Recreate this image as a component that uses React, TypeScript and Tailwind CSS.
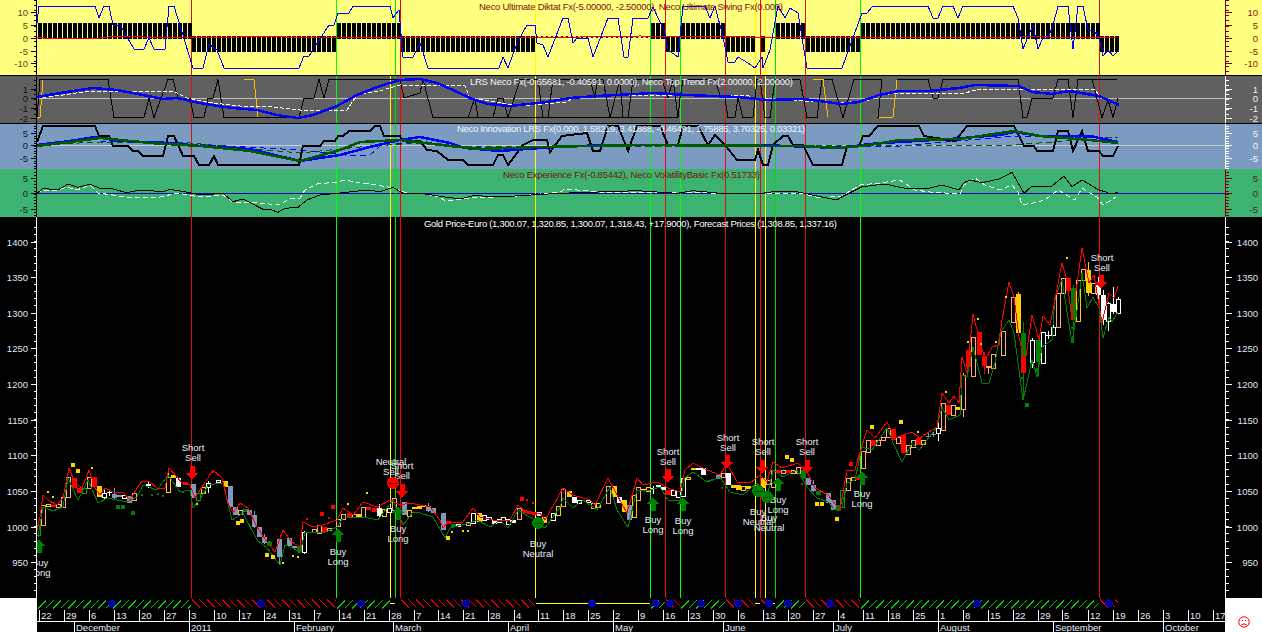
type Pt = number[]
type Candle = [number, number, number, string, number?, number?]

const pts = (p: Pt) => {
    let out = ""
    for (let i = 0; i < p.length; i += 2) out += `${p[i]},${p[i + 1]} `
    return out
}

const SIGNALS: [number, string][] = [
    [191, "#dd1111"], [336, "#00ff00"], [390, "#ffff00"], [395, "#00e000"], [400, "#ff0000"],
    [535, "#ffff00"], [650, "#00ff00"], [665, "#dd1111"], [680, "#00ff00"], [725, "#dd1111"],
    [755, "#ffff00"], [760, "#ff0000"], [765, "#ffff00"], [775, "#00e000"], [805, "#dd1111"],
    [860, "#00ff00"], [1099, "#dd1111"],
]

const SWING = [37,23,39,6,95,6,99,18,104,6,109,6,113,25,120,25,134,49,144,49,149,38,154,49,165,49,169,6,174,6,193,68,203,68,209,44,217,50,224,68,299,68,304,56,309,56,329,25,334,25,338,13,349,13,353,6,390,6,393,18,399,10,403,57,413,57,420,43,428,68,499,68,503,57,508,68,517,43,527,25,535,25,537,43,543,45,548,57,563,18,568,18,573,43,577,38,588,38,593,57,608,18,618,18,624,57,628,57,633,18,648,18,653,7,665,33,668,50,678,57,683,6,705,6,710,18,715,6,723,37,728,62,735,62,738,57,748,63,755,68,762,57,763,68,770,50,778,6,785,18,790,8,798,13,807,68,842,68,862,13,867,13,873,6,928,6,933,18,938,18,943,6,953,6,958,18,963,6,1013,6,1018,18,1023,49,1033,25,1038,49,1043,38,1048,38,1053,25,1058,6,1068,6,1073,49,1078,6,1083,6,1088,30,1093,30,1099,37,1103,56,1108,50,1113,56,1119,50]
const DIKTAT_RED = [37,37,50,39,100,38,117,36,143,37,167,37,187,38,240,37,270,36,300,38,340,37,420,37,520,38,640,36,700,37,725,36,760,38,800,37,860,38,1020,37,1040,36,1060,38,1118,37]

const LRS_BLUE = [37,97,67,92,93,88,117,90,143,95,163,99,177,98,200,103,217,106,233,108,257,110,277,115,298,118,313,115,337,106,357,95,377,87,400,80,420,79,437,83,453,90,470,98,487,104,510,106,547,102,570,98,597,96,653,93,687,95,737,97,767,100,803,99,842,104,859,102,879,95,899,91,929,91,959,88,975,85,1019,86,1032,92,1052,94,1069,91,1099,96,1119,105]
const LRS_WHITE = [37,98,63,95,83,92,173,91,187,98,213,103,240,106,273,107,300,110,347,110,357,95,383,90,400,85,465,86,470,98,520,106,567,102,573,97,620,95,747,95,753,98,840,103,869,100,879,95,899,93,965,93,979,89,1017,89,1094,89,1099,95,1118,105]
const TREND = [37,117.5,40,79.5,108,79.5,114,117.5,144,117.5,149,98,154,117.5,168,79.5,173,79.5,178,98,190,98,194,117.5,204,117.5,208,98,213,98,218,79.5,224,117.5,299,117.5,304,98,314,98,319,79.5,324,98,329,79.5,400,79.5,404,98,420,93,423,79.5,433,117.5,468,117.5,475,98,478,117.5,493,117.5,498,98,503,98,508,117.5,520,79.5,538,79.5,543,117.5,548,117.5,553,79.5,590,79.5,595,98,597,79.5,603,79.5,610,117.5,620,79.5,623,117.5,628,117.5,633,79.5,662,79.5,668,98,673,79.5,678,117.5,680,98,683,79.5,715,79.5,720,95,725,98,728,117.5,735,117.5,738,98,743,117.5,753,117.5,757,79.5,760,79.5,765,117.5,770,117.5,775,79.5,800,79.5,807,117.5,817,117.5,822,79.5,832,79.5,843,117.5,854,79.5,882,79.5,878,117.5,893,117.5,897,80,928,79.5,933,98,938,98,943,79.5,1018,79.5,1023,117.5,1027,117.5,1032,98,1053,98,1058,79.5,1068,79.5,1073,117.5,1078,79.5,1092,79.5,1102,117.5,1108,100,1113,117.5,1118,98]

const INNO_BLACK = [37,142,43,126,95,126,99,136,109,136,113,146,128,146,133,151,138,151,143,156,163,156,168,136,174,136,183,156,194,156,199,165,209,165,214,156,218,165,299,165,303,146,320,146,324,141,335,141,338,136,343,136,349,131,370,131,375,126,380,126,384,136,400,136,403,141,420,141,427,150,437,151,448,160,463,160,468,165,493,165,498,155,503,155,508,165,523,145,533,140,547,140,550,152,562,136,587,133,593,151,600,151,608,126,618,126,628,151,637,126,660,126,668,145,678,145,683,126,698,126,708,145,715,135,725,145,737,160,755,160,758,150,763,165,768,165,773,145,783,136,788,136,793,145,803,145,813,165,842,165,847,146,859,146,863,136,869,136,878,126,919,126,924,136,955,141,967,126,1014,126,1024,146,1034,146,1037,151,1053,151,1058,131,1068,131,1073,151,1082,131,1088,151,1099,151,1103,156,1113,156,1118,146]
const INNO_BLUE = [37,145,70,141,95,137,120,141,170,143,200,146,250,149,300,161,340,155,370,147,400,140,420,137,450,143,465,148,500,151,540,148,570,146,640,145,760,145,840,148,870,144,899,142,950,139,1000,135,1014,132,1040,136,1090,136,1118,142]
const INNO_GREEN = [37,146,70,142,100,138,150,143,200,146,250,151,300,161,340,150,360,142,400,140,450,146,480,149,540,147,640,145,800,146,840,148,870,145,899,140,960,139,1014,131,1040,136,1090,140,1118,143]
const INNO_DASH_BLUE = [100,141,190,144,300,150,345,155,370,155,380,146,420,141,470,148,570,146,760,146,870,147,900,146,1014,136,1118,138]
const INNO_DASH_GREEN = [37,145,100,142,190,143,300,153,370,146,420,143,470,147,640,146,800,146,900,145,1000,146,1118,137]

const EXP_BLACK = [37,193.3,43,188.3,58,190,68,184,78,187.3,90,184.3,100,188.3,110,188.3,127,192.7,140,190,163,191.7,170,189.3,190,192.7,200,195,223,193.3,233,201.7,243,199,263,209.3,270,209.3,278,212.3,285,208.3,298,207.3,307,200,320,195,337,193.3,367,190,380,191.7,393,187.3,403,193.3,420,193.3,443,196.7,460,199,473,195.7,503,196.7,560,193.3,607,191.7,637,190.7,677,193.3,693,190.7,720,193.3,757,194,773,191.7,797,191.7,820,196.7,837,200,842,196.7,862,186.7,885,184,905,188.3,929,188.3,942,185,959,190,964,182.7,970,180,982,182.7,999,179,1012,172.3,1024,193.3,1032,186,1052,186,1064,176,1072,186.7,1082,180,1099,190,1105,191.7,1110,194,1118,192.3]
const EXP_WHITE = [37,193,43,190,58,190,67,187,77,190,90,185,98,193,113,195,130,198,160,197,177,193,200,197,223,195,233,202,260,203,278,205,290,199,300,198,305,190,317,184,337,182,345,180,360,183,377,185,393,188,407,193,420,193,440,197,445,201,470,198,520,196,560,192,565,189,600,192,680,192,710,193,770,194,800,193,820,198,842,196,860,185,880,183,900,180,915,190,930,192,960,194,964,185,975,178,985,185,1000,190,1012,185,1018,192,1022,205,1027,204,1033,203,1045,200,1058,190,1075,200,1082,188,1097,197,1103,205,1112,200,1116,197]

const RED_BAND = [37,530,40,517,43,495,48,500,57,505,63,498,69,468,75,483,82,488,89,470,95,488,100,495,105,488,115,493,123,492,130,500,137,488,142,481,150,482,157,488,165,488,169,468,177,477,182,483,190,485,195,498,200,490,213,470,222,478,228,503,233,513,240,503,248,508,257,527,267,542,275,552,283,530,292,542,300,547,303,522,313,527,323,525,337,520,343,508,353,515,363,502,377,507,390,500,400,505,410,503,430,507,440,520,443,528,448,522,463,522,473,508,480,517,493,520,510,520,518,505,527,513,540,513,545,520,563,488,573,495,590,500,595,505,608,478,617,495,627,513,637,478,643,485,657,482,668,488,680,492,685,470,693,463,707,470,720,475,727,463,737,482,750,483,760,475,767,482,773,462,782,468,798,463,807,472,815,488,828,495,840,510,847,470,855,470,860,452,867,430,875,438,887,422,895,438,912,432,920,438,929,432,937,427,942,393,949,403,954,396,959,403,962,357,967,373,973,314,979,337,985,360,992,347,999,345,1002,320,1009,282,1014,297,1019,337,1025,363,1032,315,1039,340,1043,316,1050,325,1055,300,1062,263,1067,280,1072,320,1082,248,1089,283,1094,275,1102,323,1109,293,1114,298,1118,286]
const GREEN_BAND = [38,537,43,507,53,511,63,507,68,478,78,500,88,480,98,503,107,498,127,502,137,497,143,485,157,490,168,475,180,492,190,490,193,508,200,500,208,485,223,483,232,520,243,513,257,540,267,548,280,565,285,545,293,548,300,553,305,532,323,533,337,527,343,518,363,517,378,520,393,500,403,525,413,512,420,513,433,517,445,538,450,528,470,523,477,520,490,527,500,520,508,528,518,510,530,517,545,528,560,507,563,498,573,508,583,500,597,510,610,487,617,510,628,527,637,490,650,490,660,487,668,500,680,500,685,478,693,472,707,482,720,477,730,492,743,495,757,483,767,497,773,470,783,477,797,470,807,487,817,498,828,502,835,510,842,507,847,483,855,480,862,447,872,450,887,428,894,445,902,462,912,443,919,450,937,427,942,407,949,420,960,415,962,375,967,377,973,347,982,383,989,383,995,363,1000,333,1009,320,1014,333,1023,400,1027,383,1032,360,1037,377,1042,347,1052,340,1055,297,1062,280,1072,343,1079,297,1082,273,1087,308,1093,297,1099,308,1103,338,1109,317,1112,322,1118,312]

const CANDLES: Candle[] = [
    [38,525,535,"e"],[43,505,525,"o"],[48,504,506,"y"],[53,505,507,"R"],[58,504,507,"o"],[63,497,507,"o"],[68,477,497,"o"],[74,478,488,"R"],[79,488,493,"R"],[84,488,493,"e"],[89,477,488,"o"],[94,477,487,"R"],[99,486,497,"Y"],[104,493,497,"w",490,499],[109,492,493,"W",490,496],[114,494,498,"B",488,499],[119,495,497,"B"],[124,495,498,"w"],[129,496,503,"B"],[134,493,500,"o"],
    [148,484,486,"W",482,488],[168,477,492,"y",473,493],[173,475,478,"Y"],[178,478,487,"W"],[185,482,485,"R"],[193,484,498,"B"],[198,493,500,"e"],[203,487,493,"y"],[208,483,487,"w",481,493],[218,480,482,"w"],[225,481,487,"Y"],[230,486,507,"B"],[235,507,515,"B"],[240,510,514,"o"],[245,509,512,"G"],[249,510,515,"B"],[254,515,527,"B",511,528],[259,527,537,"B"],[264,537,543,"B",534,544],[269,542,546,"G"],[279,539,557,"B",538,565],[289,538,546,"B"],[294,546,548,"B"],[299,547,552,"G"],[304,532,552,"w",531,554],
    [314,529,532,"o"],[319,525,533,"o"],[324,527,532,"R"],[329,528,530,"o"],[338,519,526,"o"],[343,514,519,"o"],[349,513,518,"R"],[354,514,517,"o"],[359,514,517,"Y"],[363,507,517,"o"],[368,507,510,"R"],[374,508,512,"R"],[379,508,516,"W",504,518],[384,509,516,"y"],[389,508,512,"w"],[394,498,510,"o"],[404,502,515,"B"],[409,510,516,"y"],[414,507,509,"Y"],[419,506,509,"Y"],
    [423,505,507,"Y"],[428,506,511,"B",503,512],[433,508,513,"B"],[443,513,530,"B"],[448,521,524,"R"],[453,524,527,"G"],[458,524,526,"w"],[468,522,525,"o"],[473,513,523,"w"],[479,513,522,"Y"],[484,515,520,"w"],[489,517,519,"w"],[494,520,524,"W"],[499,519,522,"w"],[503,517,520,"w"],[508,519,524,"w"],[513,520,523,"W"],[519,508,519,"o"],[524,510,513,"R"],[529,511,513,"R"],[534,512,515,"R"],[539,512,516,"W"],[544,517,523,"Y"],[553,513,520,"w"],[558,506,515,"y"],[563,489,506,"o"],[569,491,497,"Y"],[574,497,503,"W"],[579,500,503,"w"],[588,500,502,"w"],[593,503,508,"o"],[598,503,507,"y"],
    [608,486,503,"o"],[614,486,497,"Y"],[619,497,503,"W"],[624,500,512,"Y"],[629,505,520,"B"],[634,495,517,"y"],[638,487,500,"o"],[643,489,491,"Y"],[648,487,491,"y"],[653,488,489,"W",486,494],[658,485,487,"W"],[663,487,490,"W"],[668,490,495,"R"],[673,490,495,"w"],[678,491,497,"w"],[683,478,496,"w"],[688,477,479,"y"],[693,468,470,"Y"],[698,468,470,"W"],[703,468,475,"W"],[718,475,479,"B"],[723,473,477,"o"],[728,473,485,"W"],[733,485,488,"Y"],[738,485,490,"Y"],[743,486,490,"y"],[748,486,489,"Y"],[758,486,491,"W"],[763,478,488,"Y"],[768,480,484,"o"],[773,470,487,"o"],[778,470,473,"R"],[783,470,473,"o"],[788,470,473,"R"],[793,470,473,"o"],[798,467,473,"o"],[803,470,479,"G"],[808,478,485,"B"],[813,485,491,"B",480,492],[818,491,495,"G"],[828,493,503,"B"],[833,500,510,"B"],[838,505,511,"G"],
    [842,490,507,"e"],[848,478,490,"o"],[853,477,480,"y"],[858,477,480,"R"],[863,451,468,"o"],[868,440,452,"o"],[873,440,446,"R"],[878,440,445,"o"],[883,437,440,"o"],[888,428,437,"o"],[893,429,440,"R"],[898,437,443,"o"],[903,435,453,"R"],[908,445,454,"o"],[913,440,447,"o"],[918,438,445,"R"],[923,440,444,"y"],[928,436,437,"B",433,439],[933,434,435,"B",431,437],[938,428,433,"w",423,441],
    [943,403,430,"o"],[948,405,415,"R"],[953,405,415,"o"],[958,407,410,"Y"],[963,375,409,"o",373,417],[968,350,367,"R"],[973,337,376,"o"],[979,332,355,"R"],[984,356,366,"R",352,374],[988,366,367,"o",366,374],[993,354,368,"o"],[1003,331,355,"o"],[1013,297,322,"o"],[1018,294,333,"Y",292,337],[1023,333,373,"G",322,400],[1023,357,373,"R"],[1032,340,362,"w",338,368],[1038,340,362,"G",338,376],[1043,332,363,"w"],[1048,335,336,"W",331,339],[1053,327,335,"w",325,336],[1058,293,327,"o"],[1063,278,293,"o"],[1068,278,291,"R"],[1073,288,320,"G",285,343],[1078,280,321,"y"],[1083,269,280,"o"],[1088,270,293,"Y",262,296],[1093,283,293,"y"],[1098,285,295,"W",277,300],[1103,295,320,"W",290,325],[1108,303,321,"w",302,331],[1113,304,312,"W",287,314],[1118,299,313,"w",297,314],
]

const DOTS: [number, number, number, string][] = [
    [73,465,2.5,"#ffd700"],[78,471,2.5,"#ffd700"],[92,468,1.5,"#ffd700"],[48,492,1.5,"#ffd700"],[53,497,1.5,"#ffd700"],[197,504,1.5,"#ffd700"],[238,523,2.5,"#ffd700"],[242,521,2.5,"#ffd700"],[267,555,2.5,"#ffd700"],[273,557,2.5,"#ffd700"],[283,563,1.5,"#ffd700"],[293,556,1.5,"#ffd700"],[298,557,1.5,"#ffd700"],[348,504,1.5,"#ffd700"],[367,493,1.5,"#ffd700"],[448,538,2.5,"#ffd700"],[452,532,1.5,"#ffd700"],[463,531,1.5,"#ffd700"],[468,531,1.5,"#ffd700"],[787,457,2.5,"#ffd700"],[792,460,2.5,"#ffd700"],[817,504,2.5,"#ffd700"],[822,504,2.5,"#ffd700"],[837,519,2.5,"#ffd700"],[872,427,2.5,"#ffd700"],[901,422,2.5,"#ffd700"],[918,432,1.5,"#ffd700"],[946,392,1.5,"#ffd700"],[968,342,1.5,"#ffd700"],[978,319,1.5,"#ffd700"],[981,344,1.5,"#ffd700"],[996,342,1.5,"#ffd700"],[1006,297,1.5,"#ffd700"],[1067,258,1.5,"#ffd700"],
    [213,472,1.5,"#ff0000"],[307,519,1.5,"#ff0000"],[333,507,2.5,"#ff0000"],[322,514,2.5,"#ff0000"],[329,518,1.5,"#ff0000"],[522,499,2.5,"#ff0000"],[527,500,1.5,"#ff0000"],[533,503,1.5,"#ff0000"],[851,464,2.5,"#ff0000"],[858,459,1.5,"#ff0000"],
    [118,507,2.5,"#008000"],[123,507,2.5,"#008000"],[133,513,2.5,"#008000"],[142,495,1.5,"#008000"],[152,495,1.5,"#008000"],[158,494,1.5,"#008000"],[163,496,1.5,"#008000"],[183,492,1.5,"#008000"],[269,543,2,"#008000"],[708,481,1.5,"#008000"],[712,480,1.5,"#008000"],[722,488,1.5,"#008000"],[802,484,1.5,"#008000"],[1027,405,2.5,"#008000"],[1022,378,1.5,"#008000"],[1037,370,2,"#008000"],[1072,328,1.5,"#008000"],
]

const SHORTS = [[193,192,447,466],[402,402,465,484],[668,668,451,469],[728,727,437,455],[763,762,441,460],[807,807,441,460],[1102,1101,257,275]]
const LONGS = [[40,39,562,539],[338,338,551,528],[398,398,528,506],[653,653,519,497],[683,683,520,497],[778,778,499,477],[862,862,493,471]]
const NEUTRALS = [[538,538,523,543],[758,758,491,511],[769,767,497,517]]

const WEEKS: [number, string][] = [
    [39,"22"],[64,"29"],[89,"6"],[114,"13"],[139,"20"],[164,"27"],[189,"3"],[214,"10"],[239,"17"],[264,"24"],[289,"31"],[314,"7"],[339,"14"],[364,"21"],[389,"28"],[414,"7"],[438,"14"],[463,"21"],[488,"28"],[514,"4"],[538,"11"],[563,"18"],[588,"25"],[613,"2"],[638,"9"],[663,"16"],[688,"23"],[713,"30"],[738,"6"],[763,"13"],[788,"20"],[813,"27"],[838,"4"],[863,"11"],[888,"18"],[913,"25"],[938,"1"],[963,"8"],[988,"15"],[1013,"22"],[1038,"29"],[1062,"5"],[1088,"12"],[1113,"19"],[1138,"26"],[1163,"3"],[1188,"10"],[1213,"17"],
]
const MONTHS: [number, string][] = [[74,"December"],[189,"2011"],[294,"February"],[393,"March"],[508,"April"],[613,"May"],[723,"June"],[833,"July"],[938,"August"],[1053,"September"],[1163,"October"]]

const HATCH: [number, number, string][] = [
    [37,191,"g"],[191,336,"r"],[336,390,"g"],[390,395,"y"],[400,535,"r"],[536,650,"y"],[650,665,"g"],[665,680,"r"],[680,725,"g"],[725,755,"r"],[755,760,"y"],[760,765,"r"],[765,775,"y"],[775,805,"g"],[805,860,"r"],[860,1099,"g"],[1099,1118,"r"],
]
const RINGS = [112,261,361,466,592,656,670,701,738,769,788,830,977,1109]

const BAR_RUNS: [number, number, number][] = [
    [37,191,1],[191,336,-1],[336,400,1],[400,536,-1],[650,665,1],[665,680,-1],[680,725,1],[725,755,-1],[760,765,-1],[775,805,1],[805,860,-1],[860,1099,1],[1099,1120,-1],
]

function Signals({ y1, y2 }: { y1: number; y2: number }) {
    return (
        <>
            {SIGNALS.map(([x, c]) => (
                <line key={x} x1={x + 0.5} x2={x + 0.5} y1={y1} y2={y2} stroke={c} />
            ))}
        </>
    )
}

function Line({ p, c, w = 1, dash }: { p: Pt; c: string; w?: number; dash?: string }) {
    return <polyline points={pts(p)} fill="none" stroke={c} strokeWidth={w} strokeDasharray={dash} />
}

function Title({ y, x1, x2, fill, children }: { y: number; x1: number; x2: number; fill: string; children: string }) {
    return (
        <text x={x1} y={y} fill={fill} fontSize={9.5} textLength={x2 - x1} lengthAdjust="spacing">
            {children}
        </text>
    )
}

type AxisProps = {
    top: number
    height: number
    side: "left" | "right"
    line: string
    label: string
    minor: number[]
    major: [number, string][]
}

function Axis({ top, height, side, line, label, minor, major }: AxisProps) {
    const left = side === "left"
    const x0 = left ? 0 : 1225
    const base = left ? 36.5 : 1225.5
    const dir = left ? -1 : 1
    return (
        <svg viewBox={`${x0} ${top} 37 ${height}`} className="block h-full w-[37px] shrink-0" shapeRendering="crispEdges">
            <line x1={base} x2={base} y1={top} y2={top + height} stroke={line} />
            {minor.map((y) => (
                <line key={y} x1={base} x2={base + dir * 3} y1={y} y2={y} stroke={line} />
            ))}
            {major.map(([y, t]) => (
                <g key={t}>
                    <line x1={base} x2={base + dir * 6} y1={y} y2={y} stroke={line} />
                    <text x={left ? 28 : 1258} y={y + 3.5} textAnchor="end" fontSize={9.5} fill={label}>
                        {t}
                    </text>
                </g>
            ))}
        </svg>
    )
}

const range = (from: number, to: number, step: number) => {
    const out: number[] = []
    for (let y = from; y <= to; y += step) out.push(Math.round(y) + 0.5)
    return out
}

const YELLOW_T: [number, string][] = [[12.5,"10"],[25.5,"5"],[38,"0"],[51,"-5"],[63.5,"-10"]]
const GRAY_T: [number, string][] = [[89,"1"],[98.5,"0"],[108.5,"-1"],[118,"-2"]]
const BLUE_T: [number, string][] = [[133,"5"],[145.5,"0"],[158,"-5"]]
const GREEN_T: [number, string][] = [[178,"5"],[193.5,"0"],[209,"-5"]]
const PRICE_T: [number, string][] = [1400,1350,1300,1250,1200,1150,1100,1050,1000,950].map((p) => [Math.round(241.5 + (1400 - p) * 0.7125) + 0.5, String(p)])

function Row({ top, height, bg, left, right, children }: { top: number; height: number; bg: string; left: React.ReactNode; right: React.ReactNode; children: React.ReactNode }) {
    return (
        <div className={`flex shrink-0 ${bg}`} style={{ height }}>
            {left}
            <svg viewBox={`37 ${top} 1188 ${height}`} className="block h-full min-w-0 flex-1" shapeRendering="crispEdges">
                {children}
            </svg>
            {right}
        </div>
    )
}

function Sad() {
    return (
        <svg viewBox="0 0 12 12" className="h-3 w-3 text-[#ff0000]" fill="none" stroke="currentColor" strokeWidth={1}>
            <circle cx="6" cy="6" r="5.2" />
            <path d="M3.2 9 Q6 6.6 8.8 9" />
            <path d="M3.8 4.5h1.2M7 4.5h1.2" />
        </svg>
    )
}

function Chart() {
    return (
        <>
            <Signals y1={217} y2={598} />
            {CANDLES.map(([x, t, b, k, wt, wb], i) => {
                const color: Record<string, string> = { w: "#ffffff", o: "#ffaa70", y: "#ffcc00", e: "#00a000", W: "#ffffff", Y: "#ffcc00", R: "#ff0000", G: "#008000", B: "#8098c0" }
                const hollow = k === k.toLowerCase()
                return (
                    <g key={i}>
                        <line x1={x + 0.5} x2={x + 0.5} y1={wt ?? t} y2={wb ?? b} stroke={color[k]} />
                        <rect x={hollow ? x - 1.5 : x - 2} y={t} width={hollow ? 4 : 5} height={Math.max(b - t, 1)} fill={hollow ? "#000000" : color[k]} stroke={hollow ? color[k] : "none"} />
                    </g>
                )
            })}
            <Line p={GREEN_BAND} c="#008000" />
            <Line p={RED_BAND} c="#ff0000" />
            {DOTS.map(([x, y, r, c], i) => (
                <circle key={i} cx={x} cy={y} r={r} fill={c} />
            ))}
            {SHORTS.map(([tx, ax, ty, at]) => (
                <g key={tx}>
                    <text x={tx} y={ty + 3.5} fill="#e6eefc" fontSize={9.5} textAnchor="middle">Short</text>
                    <text x={tx} y={ty + 14} fill="#e6eefc" fontSize={9.5} textAnchor="middle">Sell</text>
                    <path d={`M${ax - 2.5} ${at}h5v7h3.5l-6 6.5l-6 -6.5h3.5z`} fill="#ff0000" />
                </g>
            ))}
            {LONGS.map(([tx, ax, ty, at]) => (
                <g key={tx}>
                    <text x={tx} y={ty + 3.5} fill="#e6eefc" fontSize={9.5} textAnchor="middle">Buy</text>
                    <text x={tx} y={ty + 14} fill="#e6eefc" fontSize={9.5} textAnchor="middle">Long</text>
                    <path d={`M${ax} ${at}l6 6.5h-3.5v7h-5v-7h-3.5z`} fill="#008000" />
                </g>
            ))}
            {NEUTRALS.map(([tx, ax, cy, ty]) => (
                <g key={tx}>
                    <circle cx={ax} cy={cy} r={6} fill="#008000" />
                    <line x1={ax - 4} x2={ax + 4} y1={cy} y2={cy} stroke="#003000" strokeDasharray="2 1" />
                    <text x={tx} y={ty + 3.5} fill="#e6eefc" fontSize={9.5} textAnchor="middle">Buy</text>
                    <text x={tx} y={ty + 14} fill="#e6eefc" fontSize={9.5} textAnchor="middle">Neutral</text>
                </g>
            ))}
            <circle cx={393} cy={483} r={6} fill="#ff0000" />
            <line x1={389} x2={397} y1={483.5} y2={483.5} stroke="#300000" strokeDasharray="2 1" />
            <text x={391} y={464.5} fill="#e6eefc" fontSize={9.5} textAnchor="middle">Neutral</text>
            <text x={391} y={475} fill="#e6eefc" fontSize={9.5} textAnchor="middle">Sell</text>
            <Title y={227} x1={424} x2={837} fill="#ffffff">Gold Price-Euro (1,300.07, 1,320.85, 1,300.07, 1,318.43, +17.9000), Forecast Prices (1,308.85, 1,337.16)</Title>
        </>
    )
}

function TimeAxis() {
    return (
        <svg viewBox="37 598 1188 34" className="block h-full min-w-0 flex-1" shapeRendering="crispEdges">
            {HATCH.map(([a, b, k]) => {
                if (k === "y") return <line key={a} x1={a} x2={b} y1={603.5} y2={603.5} stroke="#ffff00" />
                const out = []
                for (let x = a + 1; x < b - 1; x += 7.5) {
                    const x2 = Math.min(x + 8, b)
                    out.push(
                        k === "g"
                            ? <line key={x} x1={x} x2={x2} y1={608.5} y2={608.5 - (x2 - x)} stroke="#00d000" />
                            : <line key={x} x1={x} x2={x2} y1={599.5} y2={599.5 + (x2 - x)} stroke="#e00000" />
                    )
                }
                return <g key={a}>{out}</g>
            })}
            {RINGS.map((x) => (
                <g key={x}>
                    <circle cx={x} cy={603.5} r={3.2} fill="#000090" stroke="#0000ff" />
                </g>
            ))}
            {WEEKS.map(([x, t]) => (
                <g key={x}>
                    <line x1={x + 0.5} x2={x + 0.5} y1={610} y2={621} stroke="#ffffff" />
                    <text x={x + 2} y={619} fill="#e6eefc" fontSize={9.5}>{t}</text>
                </g>
            ))}
            <line x1={37} x2={1225} y1={621.5} y2={621.5} stroke="#ffffff" />
            {MONTHS.map(([x, t]) => (
                <g key={x}>
                    <line x1={x + 0.5} x2={x + 0.5} y1={622} y2={632} stroke="#ffffff" />
                    <text x={x + 2} y={631} fill="#e6eefc" fontSize={9.5}>{t}</text>
                </g>
            ))}
        </svg>
    )
}

export default function App() {
    const bars: React.ReactNode[] = []
    for (const [a, b, s] of BAR_RUNS) {
        for (let x = a + 1; x < b; x += 5) {
            bars.push(<rect key={`${a}-${x}`} x={x} y={s > 0 ? 23 : 36} width={4} height={s > 0 ? 16 : 16} fill="#000000" />)
        }
    }
    for (let x = 536; x < 650; x += 5) bars.push(<rect key={`d${x}`} x={x} y={36} width={2} height={2} fill="#000000" />)

    return (
        <div className="flex h-[632px] w-[1262px] flex-col overflow-hidden bg-black font-['Liberation_Sans',Arial,sans-serif]">
            <Row
                top={0}
                height={75}
                bg="bg-[#ffff80]"
                left={<Axis top={0} height={75} side="left" line="#000000" label="#5a4a10" minor={range(0, 74, 5.1)} major={YELLOW_T} />}
                right={<Axis top={0} height={75} side="right" line="#800000" label="#8a1a0a" minor={range(0, 74, 5.1)} major={YELLOW_T} />}
            >
                <Signals y1={0} y2={75} />
                {bars}
                <Line p={DIKTAT_RED} c="#ff0000" />
                <Line p={SWING} c="#0000ff" />
                <Title y={10} x1={479} x2={783} fill="#801010">Neco Ultimate Diktat Fx(-5.00000, -2.50000), Neco Ultimate Swing Fx(0.000)</Title>
            </Row>
            <div className="mt-px" />
            <Row
                top={76}
                height={47}
                bg="bg-[#606060]"
                left={<Axis top={76} height={47} side="left" line="#000000" label="#101010" minor={range(80, 122, 4.8)} major={GRAY_T} />}
                right={<Axis top={76} height={47} side="right" line="#ffffff" label="#f0f0f0" minor={range(80, 122, 4.8)} major={GRAY_T} />}
            >
                <line x1={37} x2={1225} y1={98.5} y2={98.5} stroke="#c0c0c0" />
                <Signals y1={76} y2={123} />
                <Line p={TREND} c="#000000" />
                <Line p={[244,79.5,254,79.5,258,117]} c="#ffc000" />
                <Line p={[37,117.5,40,117.5,43,80]} c="#ffc000" />
                <Line p={[813,79.5,823,79.5,828,117]} c="#ffc000" />
                <Line p={[879,117.5,893,117.5,897,80]} c="#ffc000" />
                <Line p={[433,117.5,678,117.5]} c="#000000" />
                <Line p={[1092,79.5,1117,79.5]} c="#000000" />
                <Line p={LRS_WHITE} c="#ffffff" dash="4 2" />
                <Line p={LRS_BLUE} c="#0000ff" w={2.5} />
                <Title y={85} x1={470} x2={793} fill="#f4f6fa">LRS Neco Fx(-0.65681, -0.40591, 0.0000), Neco Top Trend Fx(2.00000, 2.00000)</Title>
            </Row>
            <div className="mt-px" />
            <Row
                top={124}
                height={45}
                bg="bg-[#7b9bc1]"
                left={<Axis top={124} height={45} side="left" line="#000000" label="#101828" minor={range(125.5, 168, 2.5)} major={BLUE_T} />}
                right={<Axis top={124} height={45} side="right" line="#ffffff" label="#f4f6fa" minor={range(125.5, 168, 2.5)} major={BLUE_T} />}
            >
                <line x1={37} x2={1225} y1={145.5} y2={145.5} stroke="#c8ccd0" />
                <Signals y1={124} y2={169} />
                <Line p={INNO_BLACK} c="#000000" w={2} />
                <Line p={INNO_DASH_BLUE} c="#0000ff" dash="6 4" />
                <Line p={INNO_DASH_GREEN} c="#005a00" dash="6 4" />
                <Line p={INNO_BLUE} c="#0000ff" w={2.5} />
                <Line p={INNO_GREEN} c="#005a00" w={2.5} />
                <Title y={132} x1={457} x2={805} fill="#f4f6fa">Neco Innovation LRS Fx(0.000, 1.58219, 3.41888, -0.46491, 1.75885, 3.70325, 0.03321)</Title>
            </Row>
            <Row
                top={169}
                height={48}
                bg="bg-[#3cb371]"
                left={<Axis top={169} height={48} side="left" line="#000000" label="#10241a" minor={range(172, 216, 3.1)} major={GREEN_T} />}
                right={<Axis top={169} height={48} side="right" line="#800000" label="#5a2410" minor={range(172, 216, 3.1)} major={GREEN_T} />}
            >
                <line x1={37} x2={1225} y1={193.5} y2={193.5} stroke="#0000c0" />
                <Signals y1={169} y2={217} />
                <Line p={EXP_WHITE} c="#ffffff" dash="5 3" />
                <Line p={EXP_BLACK} c="#000000" />
                <Title y={178} x1={503} x2={760} fill="#801010">Neco Experience Fx(-0.85442), Neco VolatilityBasic Fx(0.51733)</Title>
            </Row>
            <Row
                top={217}
                height={381}
                bg="bg-black"
                left={<Axis top={217} height={381} side="left" line="#ffffff" label="#dfe9f7" minor={range(227, 597, 7.125)} major={PRICE_T} />}
                right={<Axis top={217} height={381} side="right" line="#ffffff" label="#dfe9f7" minor={range(227, 597, 7.125)} major={PRICE_T} />}
            >
                <Chart />
            </Row>
            <div className="flex min-h-0 flex-1">
                <div className="w-[37px] shrink-0 bg-white" />
                <TimeAxis />
                <div className="flex w-[37px] shrink-0 items-end justify-center bg-white pb-1">
                    <Sad />
                </div>
            </div>
        </div>
    )
}
